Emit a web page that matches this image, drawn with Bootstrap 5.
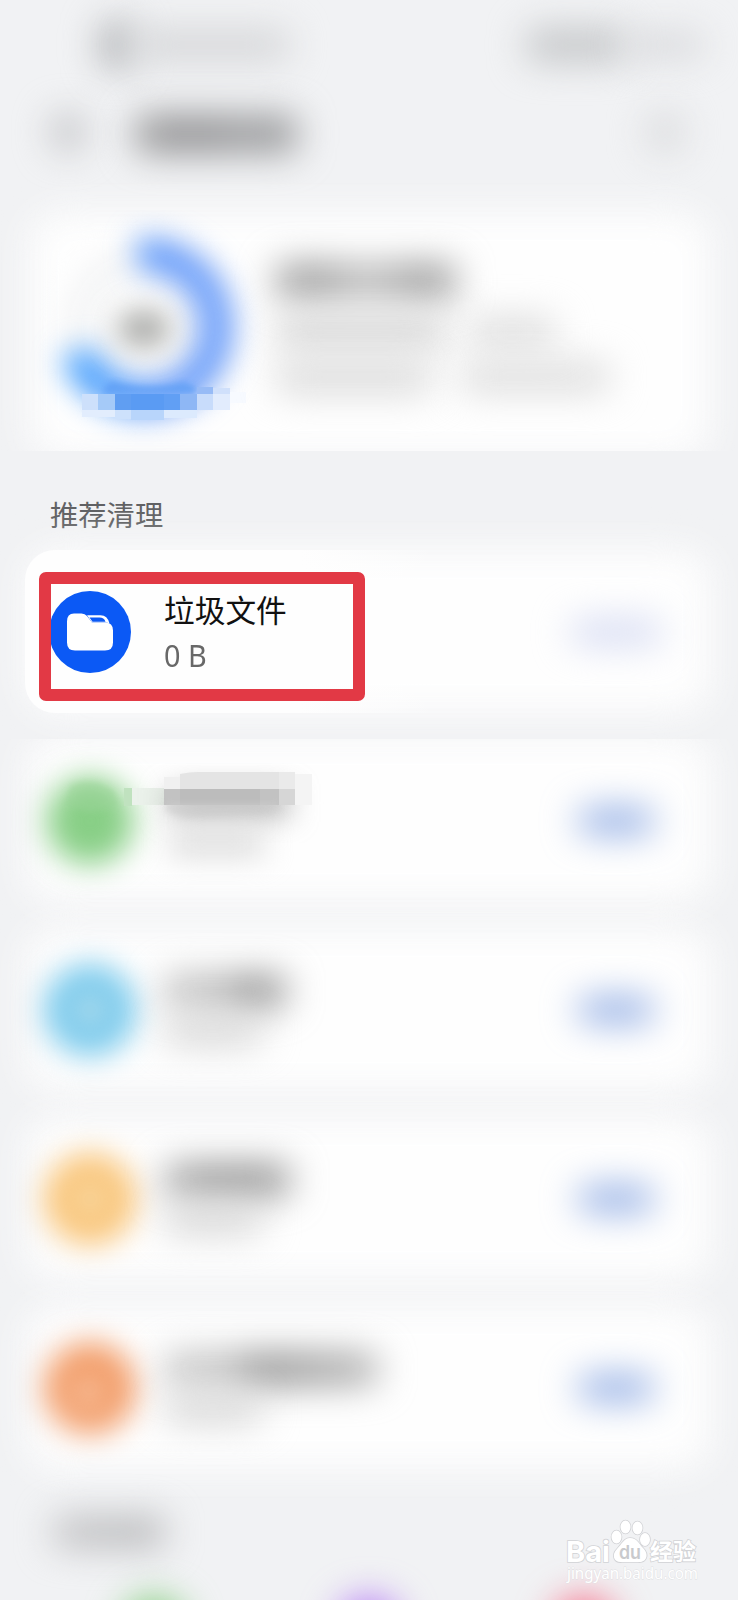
<!DOCTYPE html>
<html lang="zh-CN">
<head>
<meta charset="utf-8">
<meta name="viewport" content="width=device-width, initial-scale=1">
<title>推荐清理</title>
<link href="https://cdn.jsdelivr.net/npm/bootstrap@5.3.0/dist/css/bootstrap.min.css" rel="stylesheet">
<script src="https://cdn.jsdelivr.net/npm/bootstrap@5.3.0/dist/js/bootstrap.bundle.min.js"></script>
<style>
body{background:#f1f2f4;font-family:"Noto Sans CJK SC","Noto Sans",sans-serif;}
.screen{width:738px;height:1600px;}
.statusbar{height:90px;padding:0 34px 0 100px;}
.titlebar{height:120px;padding:0 54px 36px 51px;}
.smudge{filter:blur(18px);flex:none;border-radius:10px;}
.fade-g{background:linear-gradient(90deg,#999 25%,#bcbcbc 50%,#999 78%);}
.panel{border:0;background:none;position:relative;margin:0 26px;}
.panel::before{content:"";position:absolute;inset:0 2px;background:#fefefe;border-radius:30px;filter:blur(19px);z-index:0;}
.panel>*{position:relative;z-index:1;}
.summary{height:241px;clip-path:inset(-50px -50px 0 -50px);}
.summary::before{inset:2px 2px -8px 4px;}
.section-head{height:99px;padding:43px 0 0 50px;font-size:28.3px;line-height:40px;color:#606163;}
.rows{gap:26px;}
.entry{height:163px;margin:0 25px;padding:0 44px 0 17px;}
.entry.clipped{clip-path:inset(0 -50px -50px -50px);}
.entry.clipped::before{inset:-3px 2px 0;}
.entry.sharp::after{content:"";position:absolute;inset:0;border-radius:30px;background:linear-gradient(90deg,#fefefe 40%,transparent 60%);z-index:0;}
.entry .dot{width:96px;height:96px;flex:none;overflow:visible;}
.entry .info{margin-left:26px;}
.name-line{font-size:30.7px;line-height:40px;color:#111;position:relative;top:1px;}
.size-line{font-size:30px;line-height:40px;color:#686868;margin-top:8px;font-family:"Noto Sans",sans-serif;transform:scaleX(.96);transform-origin:left;}
.action{width:76px;height:24px;border-radius:12px;background:#86a5e2;filter:blur(18px);margin-right:15px;flex:none;}
.action.pale{width:92px;background:#d2d8f2;margin-right:7px;}
.callout{position:absolute!important;left:14px;top:22px;width:326px;height:129px;border:12px solid #e23945;border-radius:7px;}
.tiles{padding:0 122px;}
.tile{width:64px;height:64px;border-radius:50%;filter:blur(18px);}
.stamp{position:absolute;right:24px;bottom:8px;}
</style>
</head>
<body>
<main class="screen position-relative overflow-hidden">
  <header>
    <div class="statusbar d-flex align-items-center">
      <div class="smudge" style="width:34px;height:48px;background:#b2b4b7"></div>
      <div class="smudge" style="width:156px;height:32px;background:#d5d6d8"></div>
      <div class="smudge ms-auto" style="width:100px;height:34px;background:#c4c6c8"></div>
      <div class="smudge" style="width:78px;height:24px;background:#d6d7da"></div>
    </div>
    <div class="titlebar d-flex align-items-center">
      <div class="smudge rounded-circle" style="width:34px;height:38px;background:#bebfc2"></div>
      <div class="smudge" style="width:162px;height:38px;margin-left:50px;margin-top:4px;background:linear-gradient(90deg,#989899,#8e8e90 38%,#9b9c9e 72%,#929395)"></div>
      <div class="smudge rounded-circle ms-auto" style="width:38px;height:44px;background:#dadbdd"></div>
    </div>
  </header>

  <section class="panel summary card flex-row">
    <svg width="240" height="241" viewBox="26 210 240 241" class="flex-shrink-0">
      <defs>
        <filter id="b8" x="-50%" y="-150%" width="200%" height="400%" color-interpolation-filters="sRGB"><feGaussianBlur stdDeviation="15"/></filter>
        <filter id="ring" x="-50%" y="-50%" width="200%" height="200%" color-interpolation-filters="sRGB"><feGaussianBlur stdDeviation="15"/></filter>
        <filter id="b4" x="-30%" y="-30%" width="160%" height="160%" color-interpolation-filters="sRGB"><feGaussianBlur stdDeviation="3"/></filter>
        <linearGradient id="arc" x1="0" x2="1"><stop offset="0" stop-color="#42a0ff"/><stop offset=".6" stop-color="#649afa"/><stop offset="1" stop-color="#6c9efa"/></linearGradient>
      </defs>
      <circle cx="146" cy="327" r="66" fill="none" stroke="#f2f3f4" stroke-width="26" filter="url(#ring)"/>
      <path d="M138 255A72 72 0 1 1 77 352" fill="none" stroke="url(#arc)" stroke-width="34" filter="url(#ring)"/>
      <ellipse cx="144" cy="329" rx="27" ry="18" fill="#a0a19e" filter="url(#b8)"/>
      <path d="M112 381Q145 391 184 382L196 387V394H104V387Z" fill="#5f9ff5" opacity=".8" filter="url(#b4)"/>
      <g shape-rendering="crispEdges">
        <path d="M82 394h16v16H82z" fill="#cde0fb"/><path d="M98 394h17v16H98z" fill="#a5caf8"/>
        <path d="M115 394h16v16h-16z" fill="#609ef2"/><path d="M131 394h33v16h-33z" fill="#5a9bf3"/>
        <path d="M164 394h16v16h-16z" fill="#619ff4"/><path d="M180 394h17v16h-17z" fill="#8eb7f5"/>
        <path d="M197 387h16v7h-16z" fill="#97bbf6"/><path d="M197 394h16v16h-16z" fill="#c8dcfb"/>
        <path d="M213 388h17v6h-17z" fill="#d0e0fb"/><path d="M213 394h17v16h-17z" fill="#e2ecfd"/>
        <path d="M230 392h16v11h-16z" fill="#f7faff"/>
        <path d="M82 410h33v7H82z" fill="#e2edfd"/><path d="M115 410h16v9h-16z" fill="#cde1fc"/>
        <path d="M131 410h33v10h-33z" fill="#b8d5fb"/><path d="M164 410h33v8h-33z" fill="#dceafd"/>
      </g>
    </svg>
    <div style="padding-top:54px;margin-left:10px">
      <div class="smudge fade-g" style="width:180px;height:34px"></div>
      <div class="d-flex" style="margin-top:18px"><div class="smudge" style="width:170px;height:32px;background:#d4d4d4"></div><div class="smudge" style="width:88px;height:28px;margin:2px 0 0 22px;background:#dadada"></div></div>
      <div class="d-flex" style="margin-top:12px"><div class="smudge" style="width:156px;height:34px;background:#dcdcdc"></div><div class="smudge" style="width:150px;height:30px;margin:2px 0 0 28px;background:#dcdcdc"></div></div>
    </div>
  </section>

  <h2 class="section-head fw-normal m-0">推荐清理</h2>

  <section class="rows d-flex flex-column">
    <article class="panel entry sharp card flex-row align-items-center">
      <svg class="dot" viewBox="0 0 96 96"><circle cx="48" cy="48" r="41" fill="#0b59f5"/><path d="M32 29.500h7.500q3.500 0 5.500 2.500l5 6.500h13q8 0 8 8v12q0 8-8 8H33q-8 0-8-8v-21q0-8 7-8Z" fill="#fff"/><path d="M45 31.200h13.500q7 0 9 8.300q-1.500-1-5-1H50Z" fill="#fff"/><path d="M47.500 33.500H57.500q4.500 0 6 4.200H50.500Z" fill="#0b59f5"/></svg>
      <div class="info"><div class="name-line">垃圾文件</div><div class="size-line">0 B</div></div>
      <div class="action pale ms-auto"></div>
      <div class="callout"></div>
    </article>

    <article class="panel entry clipped card flex-row align-items-center">
      <svg class="dot" viewBox="0 0 96 96">
        <circle cx="48" cy="48" r="44" fill="#88cf86" filter="url(#ring)"/>
        <path d="M28 13Q50 2 72 18L76 34L48 40L24 32Z" fill="#98d396" opacity=".5" filter="url(#b4)"/>
        <g shape-rendering="crispEdges"><path d="M82 15h8v18h-8z" fill="#c0e2bf"/><path d="M90 15h41v17H90z" fill="#ebf2eb"/></g>
      </svg>
      <svg width="160" height="110" viewBox="164 765 160 110" style="margin-left:26px;overflow:visible">
        <path d="M170 792h118v20H170z" fill="#909090" filter="url(#b8)"/><path d="M170 830h94v24h-94z" fill="#d8d8d8" filter="url(#b8)"/>
        <path d="M180 773q10-2 18-2h81v17h-99z" fill="#e4e4e4"/><path d="M164 788h115v16H164z" fill="#c2c2c2"/><path d="M180 788h80v16h-80z" fill="#bcbcbc"/>
        <path d="M166 802h113v6q-30 6-94 8q-12-3-19-6z" fill="#cdcdcd" opacity=".6" filter="url(#b4)"/>
        <path d="M279 771h16v17h-16z" fill="#eaeaea"/><path d="M279 788h16v16h-16z" fill="#d6d6d6"/><path d="M295 773h17v31h-17z" fill="#f4f4f4"/><path d="M164 776h16v12h-16z" fill="#f0f0f0"/>
      </svg>
      <div class="action ms-auto"></div>
    </article>

    <article class="panel entry card flex-row align-items-center">
      <svg class="dot" viewBox="0 0 96 96"><g filter="url(#ring)"><circle cx="48" cy="48" r="46" fill="#78c9ec"/><circle cx="48" cy="48" r="12" fill="#e4eeee"/></g></svg>
      <div class="info">
        <div class="smudge" style="width:122px;height:30px;background:linear-gradient(90deg,#b8b8b8 45%,#888 65%,#8c8c8c)"></div>
        <div class="smudge" style="width:98px;height:26px;margin-top:12px;background:#d2d2d2"></div>
      </div>
      <div class="action ms-auto"></div>
    </article>

    <article class="panel entry card flex-row align-items-center">
      <svg class="dot" viewBox="0 0 96 96"><g filter="url(#ring)"><circle cx="48" cy="48" r="46" fill="#f9c477"/><circle cx="48" cy="48" r="12" fill="#f8ecd0"/></g></svg>
      <div class="info">
        <div class="smudge" style="width:126px;height:30px;background:linear-gradient(90deg,#a0a0a0,#888 50%,#8c8c8c)"></div>
        <div class="smudge" style="width:98px;height:26px;margin-top:12px;background:#d2d2d2"></div>
      </div>
      <div class="action ms-auto"></div>
    </article>

    <article class="panel entry card flex-row align-items-center">
      <svg class="dot" viewBox="0 0 96 96"><g filter="url(#ring)"><circle cx="48" cy="48" r="46" fill="#f29b66"/><circle cx="46" cy="52" r="12" fill="#fce0cc"/></g></svg>
      <div class="info">
        <div class="smudge" style="width:214px;height:30px;background:linear-gradient(90deg,#bdbdbd 28%,#848484 45%,#909090 62%,#acacac)"></div>
        <div class="smudge" style="width:98px;height:26px;margin-top:12px;background:#d2d2d2"></div>
      </div>
      <div class="action ms-auto"></div>
    </article>
  </section>

  <div class="smudge" style="width:112px;height:30px;margin:48px 0 0 53px;background:linear-gradient(90deg,#c0c0c2,#b2b3b5)"></div>
  <div class="tiles d-flex justify-content-between" style="margin-top:50px">
    <div class="tile" style="background:#84cc7e"></div>
    <div class="tile" style="background:#b47bf5"></div>
    <div class="tile" style="background:#f66b86"></div>
  </div>

  <svg class="stamp" width="150" height="82" viewBox="564 1510 150 82">
    <g fill="#fff" stroke="#d2d3d6" stroke-width="1.6" paint-order="stroke">
      <text x="566" y="1561.500" font-family="Inter, sans-serif" font-weight="700" font-size="29" textLength="44" lengthAdjust="spacingAndGlyphs">Bai</text>
      <ellipse cx="616.500" cy="1537" rx="5" ry="6.500"/><ellipse cx="625.500" cy="1527" rx="5" ry="6.500"/><ellipse cx="637.500" cy="1528" rx="5" ry="6.500"/><ellipse cx="645" cy="1539.500" rx="5" ry="6.500"/>
      <path d="M630 1538c7 0 9 6 13 10c7 7 3 15-5 14h-16c-8 1-11-7-5-13c5-5 7-11 13-11Z"/>
      <text x="650" y="1560" font-family="Noto Sans CJK SC, sans-serif" font-weight="700" font-size="23" textLength="46" lengthAdjust="spacingAndGlyphs">经验</text>
    </g>
    <text x="619" y="1559" font-family="Inter, sans-serif" font-weight="600" font-size="19" fill="#c9cacd" textLength="22" lengthAdjust="spacingAndGlyphs">du</text>
    <text x="567" y="1579" font-family="Noto Sans, sans-serif" font-size="15.500" fill="#fff" stroke="#dedfe2" stroke-width=".8" paint-order="stroke" textLength="131" lengthAdjust="spacingAndGlyphs">jingyan.baidu.com</text>
  </svg>
</main>
</body>
</html>
